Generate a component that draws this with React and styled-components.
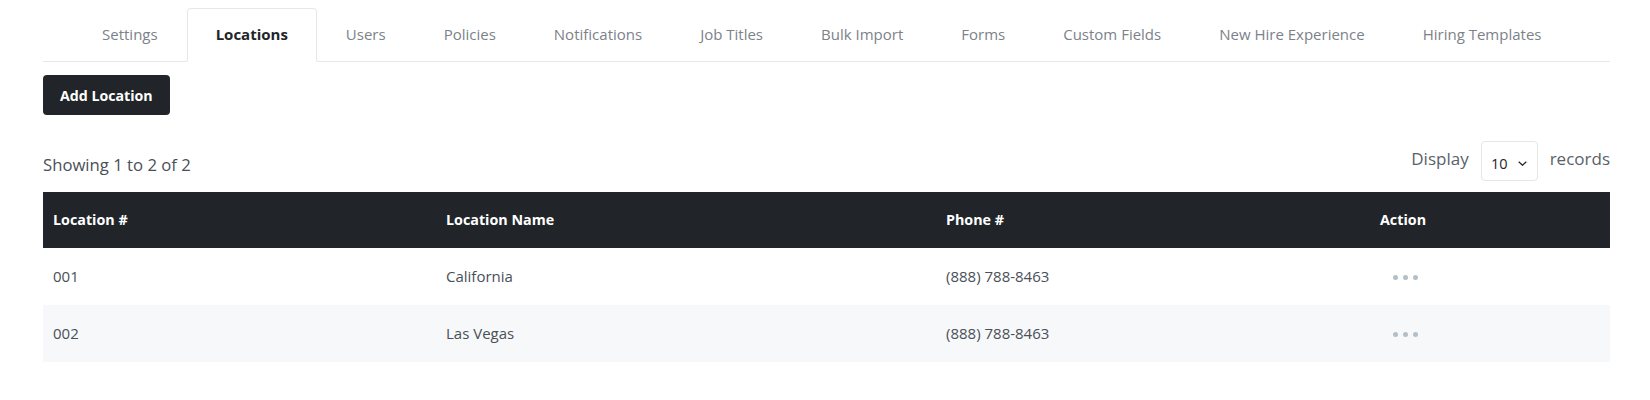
import styled, { createGlobalStyle } from 'styled-components';

const GlobalStyle = createGlobalStyle`
  body {
    margin: 0;
    background: #fff;
    font-family: "Open Sans", "Liberation Sans", sans-serif;
    color: #495057;
  }
`;

const Page = styled.div`
  padding: 8px 40px 0 43px;
`;

const Tabs = styled.ul`
  display: flex;
  margin: 0;
  padding: 0 0 0 30px;
  list-style: none;
  border-bottom: 1px solid #e6e7e9;
`;

const Tab = styled.li`
  height: 54px;
  box-sizing: border-box;
  display: flex;
  align-items: center;
  padding: 0 28px 2px;
  margin-bottom: -1px;
  font-size: 15px;
  color: ${(p) => (p.active ? '#212529' : '#7c828a')};
  font-weight: ${(p) => (p.active ? 700 : 400)};
  border: 1px solid ${(p) => (p.active ? '#e6e7e9' : 'transparent')};
  border-bottom-color: ${(p) => (p.active ? '#fff' : 'transparent')};
  border-radius: 4px 4px 0 0;
  background: ${(p) => (p.active ? '#fff' : 'transparent')};
`;

const AddButton = styled.button`
  margin-top: 13px;
  height: 40px;
  padding: 0 17px;
  background: #212529;
  color: #fff;
  border: none;
  border-radius: 4px;
  font-family: inherit;
  font-size: 14.2px;
  font-weight: 700;
`;

const ListBar = styled.div`
  display: flex;
  align-items: center;
  justify-content: space-between;
  margin-top: 26px;
  height: 39px;
  margin-bottom: 12px;
`;

const Showing = styled.span`
  font-size: 16.7px;
  color: #495057;
  padding-top: 7px;
`;

const Display = styled.div`
  display: flex;
  align-items: center;
  gap: 12px;
  font-size: 17px;
  color: #5a6168;
  height: 39px;
`;

const Label = styled.span`
  padding-bottom: 4px;
`;

const Select = styled.div`
  width: 57px;
  height: 40px;
  box-sizing: border-box;
  border: 1px solid #e4e6e8;
  border-radius: 4px;
  display: flex;
  align-items: center;
  justify-content: center;
  gap: 11px;
  padding-top: 5px;
  font-size: 14.5px;
  color: #212529;
`;

const Table = styled.table`
  width: 100%;
  border-collapse: collapse;
  table-layout: fixed;
`;

const Th = styled.th`
  box-sizing: border-box;
  background: #212529;
  color: #fff;
  text-align: left;
  font-size: 14.3px;
  font-weight: 700;
  height: 56px;
  padding: 0 10px 1px;
  width: ${(p) => p.w}px;
`;

const Row = styled.tr`
  background: ${(p) => (p.striped ? '#f7f8fa' : '#fff')};
`;

const Td = styled.td`
  box-sizing: border-box;
  height: 57px;
  padding: 0 10px 2px;
  font-size: 15px;
  color: #495057;
`;

const Dots = styled.span`
  display: inline-flex;
  vertical-align: middle;
  gap: 5px;
  margin-left: 13px;
  span {
    width: 5px;
    height: 5px;
    border-radius: 50%;
    background: #b4bfc7;
  }
`;

const tabs = [
  'Settings',
  'Locations',
  'Users',
  'Policies',
  'Notifications',
  'Job Titles',
  'Bulk Import',
  'Forms',
  'Custom Fields',
  'New Hire Experience',
  'Hiring Templates',
];

const rows = [
  { id: '001', name: 'California', phone: '(888) 788-8463' },
  { id: '002', name: 'Las Vegas', phone: '(888) 788-8463' },
];

export default function App() {
  return (
    <Page>
      <GlobalStyle />
      <Tabs>
        {tabs.map((t) => (
          <Tab key={t} active={t === 'Locations'}>
            {t}
          </Tab>
        ))}
      </Tabs>
      <AddButton>Add Location</AddButton>
      <ListBar>
        <Showing>Showing 1 to 2 of 2</Showing>
        <Display>
          <Label>Display</Label>
          <Select>
            10
            <svg width="9" height="5" viewBox="0 0 9 5" fill="none">
              <path d="M0.7 0.7l3.8 3.6 3.8-3.6" stroke="#212529" strokeWidth="1.2" />
            </svg>
          </Select>
          <Label>records</Label>
        </Display>
      </ListBar>
      <Table>
        <thead>
          <tr>
            <Th w={393}>Location #</Th>
            <Th w={500}>Location Name</Th>
            <Th w={434}>Phone #</Th>
            <Th w={240}>Action</Th>
          </tr>
        </thead>
        <tbody>
          {rows.map((r, i) => (
            <Row key={r.id} striped={i % 2 === 1}>
              <Td>{r.id}</Td>
              <Td>{r.name}</Td>
              <Td>{r.phone}</Td>
              <Td>
                <Dots>
                  <span />
                  <span />
                  <span />
                </Dots>
              </Td>
            </Row>
          ))}
        </tbody>
      </Table>
    </Page>
  );
}
